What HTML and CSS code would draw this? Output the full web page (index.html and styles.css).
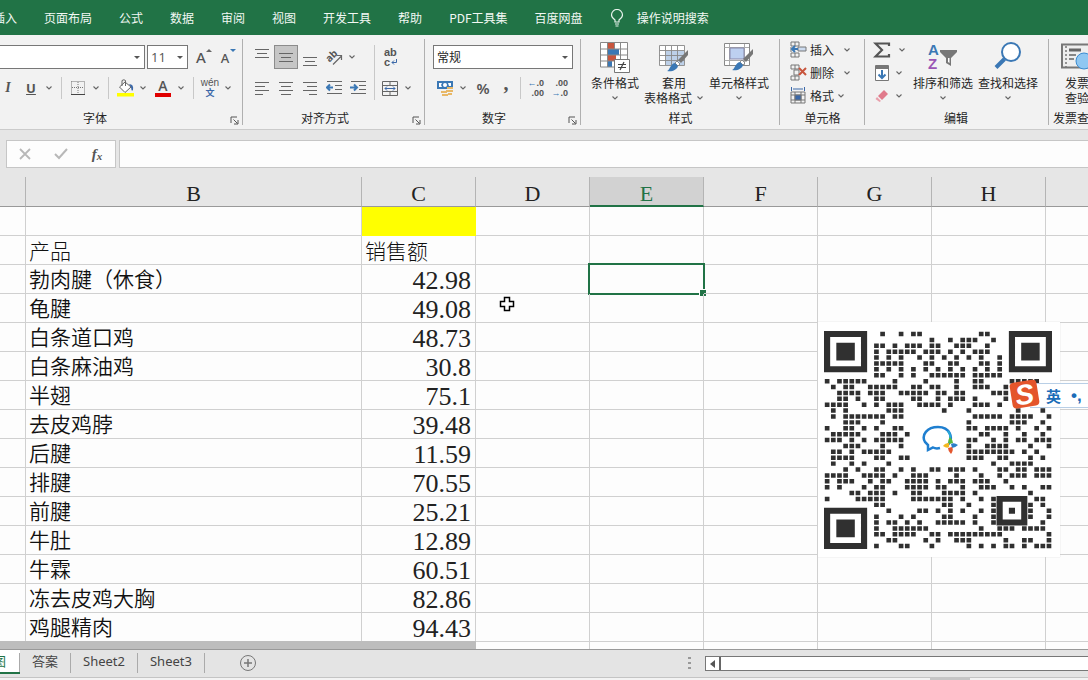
FILE: index.html
```html
<!DOCTYPE html>
<html lang="zh-CN">
<head>
<meta charset="utf-8">
<title>销售额</title>
<link rel="stylesheet" href="styles.css">
</head>
<body>
<svg class="defs" aria-hidden="true">
  <symbol id="chev" viewBox="0 0 8 6"><path d="M1.500 1.500 4 4 6.500 1.500" fill="none" stroke="#666" stroke-width="1.100"/></symbol>
  <symbol id="launch" viewBox="0 0 9 9"><path d="M1 7V1H7M3.500 3.500 7.500 7.500M8 4V8H4" fill="none" stroke="#555"/></symbol>
  <symbol id="brush" viewBox="0 0 22 22"><path d="M21 0V5L14 13 11 10Z" fill="#777"/><path d="M10 11 13 14 11 16 8 13Z" fill="#fff" stroke="#777" stroke-width=".8"/><path d="M8 13 11 16C10 20 5 22 0 21 3 20 3 14 8 13Z" fill="#3b78b5"/></symbol>
</svg>

<nav class="menu" aria-label="功能区">
  <a href="#">插入</a><a href="#">页面布局</a><a href="#">公式</a><a href="#">数据</a><a href="#">审阅</a><a href="#">视图</a><a href="#">开发工具</a><a href="#">帮助</a><a href="#">PDF工具集</a><a href="#">百度网盘</a>
  <a href="#" class="tell"><svg width="14" height="18" viewBox="0 0 14 18"><path d="M5 13V11C3 9.500 1.500 8 1.500 6A5.500 5.500 0 0 1 12.500 6C12.500 8 11 9.500 9 11V13ZM5 15H9M5.500 17H8.500" fill="none" stroke="#e9f3ed" stroke-width="1.200"/></svg>操作说明搜索</a>
</nav>

<div class="ribbon">
  <section class="group g-font">
    <div class="body">
      <div class="row">
        <button class="combo c-name" aria-label="字体名称"><span></span><i class="tri"></i></button>
        <button class="combo c-size" aria-label="字号"><span>11</span><i class="tri"></i></button>
        <button class="tool grow" aria-label="增大字号"><b class="la">A</b><i class="up"></i></button>
        <button class="tool shrink" aria-label="减小字号"><b class="sa">A</b><i class="down"></i></button>
      </div>
      <div class="row">
        <button class="tool half" aria-label="倾斜"><em class="ital">I</em></button>
        <button class="tool u-btn" aria-label="下划线"><b class="under">U</b></button><button class="ch" aria-label="下划线选项"><svg><use href="#chev"/></svg></button>
        <span class="sep"></span>
        <button class="tool" aria-label="边框"><svg width="14" height="14" viewBox="0 0 14 14"><path d="M.5 .5H13.500V13M.5 .5V13M7 1V13M1 6.500H13" fill="none" stroke="#777" stroke-dasharray="1 1"/><path d="M0 13.500H14" stroke="#444"/></svg></button><button class="ch" aria-label="边框选项"><svg><use href="#chev"/></svg></button>
        <span class="sep"></span>
        <button class="tool" aria-label="填充颜色"><svg width="17" height="18" viewBox="0 0 17 18"><path d="M8 3 14 8 8 13.500 2.500 8Z" fill="#fff" stroke="#666"/><path d="M5 7V1.500Q7 0 8.500 1.500V7" fill="none" stroke="#666"/><path d="M12 5Q17 5 16 11 15 12 14.500 11 14 7 12 5Z" fill="#3b68a8"/><path d="M0 14H17V17.500H0Z" fill="#ff0"/></svg></button><button class="ch" aria-label="填充颜色选项"><svg><use href="#chev"/></svg></button>
        <button class="tool fcol" aria-label="字体颜色"><b>A</b></button><button class="ch" aria-label="字体颜色选项"><svg><use href="#chev"/></svg></button>
        <span class="sep"></span>
        <button class="tool wen" aria-label="拼音"><span>wén</span><b>文</b></button><button class="ch" aria-label="拼音选项"><svg><use href="#chev"/></svg></button>
      </div>
    </div>
    <h2>字体</h2><button class="launch" aria-label="字体设置"><svg><use href="#launch"/></svg></button>
  </section>

  <section class="group g-align">
    <div class="split">
      <div class="body left">
        <div class="row">
          <button class="tool" aria-label="顶端对齐"><svg class="ic"><path d="M1 .5H15M3 4.500H13M1 8.500H15"/></svg></button>
          <button class="tool on" aria-label="垂直居中"><svg class="ic"><path d="M1 4.500H15M3 8.500H13M1 12.500H15"/></svg></button>
          <button class="tool" aria-label="底端对齐"><svg class="ic"><path d="M1 8.500H15M3 12.500H13M1 16.500H15"/></svg></button>
          <button class="tool" aria-label="方向"><svg class="rot" width="18" height="18" viewBox="0 0 18 18"><text x="1" y="12" transform="rotate(-45 6 9)" class="abt">ab</text><path d="M8 16.500 16 8.500M12 7.500H16.500V12" fill="none" stroke="#666" stroke-width="1.200"/></svg></button><button class="ch" aria-label="方向选项"><svg><use href="#chev"/></svg></button>
        </div>
        <div class="row">
          <button class="tool" aria-label="左对齐"><svg class="ic"><path d="M1 2.500H15M1 6.500H11M1 10.500H15M1 14.500H9"/></svg></button>
          <button class="tool" aria-label="居中"><svg class="ic"><path d="M1 2.500H15M3 6.500H13M1 10.500H15M3 14.500H13"/></svg></button>
          <button class="tool" aria-label="右对齐"><svg class="ic"><path d="M1 2.500H15M5 6.500H15M1 10.500H15M7 14.500H15"/></svg></button>
          <button class="tool" aria-label="减少缩进"><svg class="ic"><path d="M1 1.500H16M9 5.500H16M9 9.500H16M1 13.500H16"/><path class="blue" d="M7 7.500H1M4 4.500 1 7.500 4 10.500"/></svg></button>
          <button class="tool" aria-label="增加缩进"><svg class="ic"><path d="M1 1.500H16M9 5.500H16M9 9.500H16M1 13.500H16"/><path class="blue" d="M0 7.500H6M4 4.500 7 7.500 4 10.500"/></svg></button>
        </div>
      </div>
      <span class="vsep"></span>
      <div class="body">
        <div class="row"><button class="tool wrap" aria-label="自动换行"><span>ab</span><span>c<svg width="6" height="6" viewBox="0 0 6 6"><path d="M5.500 0V3.500H1M3 1.500 1 3.500 3 5.500" fill="none" stroke="#3b68a8"/></svg></span></button></div>
        <div class="row"><button class="tool" aria-label="合并后居中"><svg class="ic"><path d="M.5 1.500H15.500V15.500H.5ZM.5 5.500H15.500M.5 11.500H15.500M8 1.500V5M8 12V15"/><path class="thin" d="M3 8.500H13M5 6.500 3 8.500 5 10.500M11 6.500 13 8.500 11 10.500"/></svg></button><button class="ch" aria-label="合并选项"><svg><use href="#chev"/></svg></button></div>
      </div>
    </div>
    <h2>对齐方式</h2><button class="launch" aria-label="对齐设置"><svg><use href="#launch"/></svg></button>
  </section>

  <section class="group g-num">
    <div class="body">
      <div class="row"><button class="combo c-fmt" aria-label="数字格式"><span>常规</span><i class="tri"></i></button></div>
      <div class="row">
        <button class="tool" aria-label="会计格式"><svg width="17" height="17" viewBox="0 0 17 17"><path d="M0 1H16V9H0Z" fill="#3b78b5"/><path d="M2 3H5L4 5 5 7H2ZM11 3H14V6H12Z" fill="#fff"/><circle cx="8" cy="5" r="2" fill="#fff"/><path d="M10 8H16M9 11H16M4 12H10M5 15H11M11 14H15" stroke="#e8b868" stroke-width="2"/></svg></button><button class="ch" aria-label="会计格式选项"><svg><use href="#chev"/></svg></button>
        <button class="tool pct" aria-label="百分比">%</button>
        <button class="tool comma" aria-label="千位分隔">,</button>
        <span class="sep tight"></span>
        <button class="tool dec" aria-label="增加小数位"><span><i>←</i>.0</span><span>.00</span></button>
        <button class="tool dec" aria-label="减少小数位"><span>.00</span><span><i>→</i>.0</span></button>
      </div>
    </div>
    <h2>数字</h2><button class="launch" aria-label="数字设置"><svg><use href="#launch"/></svg></button>
  </section>

  <section class="group g-style">
    <div class="bigs">
      <button class="big"><svg width="30" height="31" viewBox="0 0 30 31"><path d="M1 1H28V25H1Z" fill="#fff"/><path d="M8 1H14V7H8ZM8 13H16V19H8Z" fill="#c8553d"/><path d="M8 7H19V13H8ZM8 19H12V25H8Z" fill="#3b78b5"/><path d="M.5 .5H27.500V25H.5ZM.5 7H28M.5 13H28M.5 19H28M7.500 1V25M14.500 1V7M20.500 1V25" fill="none" stroke="#888"/><path d="M14.500 17.500H29.500V30.500H14.500Z" fill="#fff" stroke="#777"/><path d="M18 22.500H26M18 25.500H26M24 20 20 28" stroke="#444" stroke-width="1.200"/></svg><span>条件格式</span><svg class="dn"><use href="#chev"/></svg></button>
      <button class="big"><svg width="30" height="31" viewBox="0 0 30 31"><path d="M.5 3.500H25.500V23.500H.5Z" fill="#fff"/><path d="M7 9H25V23H7Z" fill="#bdd0e8"/><path d="M.5 3.500H25.500V23.500H.5ZM.5 8.500H25M.5 13.500H25M.5 18.500H25M6.500 4V23M12.500 4V23M18.500 4V23" fill="none" stroke="#888" stroke-width=".9"/><use href="#brush" x="8" y="8" width="22" height="22"/></svg><span>套用</span><span class="two">表格格式<svg><use href="#chev"/></svg></span></button>
      <button class="big"><svg width="30" height="31" viewBox="0 0 30 31"><path d="M.5 1.500H25.500V23.500H.5Z" fill="#fff" stroke="#888"/><path d="M.5 5.500H25M.5 18.500H25M5.500 2V23M20.500 2V23" stroke="#aaa"/><path d="M6 6H20V17H6Z" fill="#bdd0f0" stroke="#88a"/><use href="#brush" x="8" y="7" width="22" height="22"/></svg><span>单元格样式</span><svg class="dn"><use href="#chev"/></svg></button>
    </div>
    <h2>样式</h2>
  </section>

  <section class="group g-cells">
    <div class="stack">
      <button class="line"><svg class="ci"><path d="M1 1H9V5H1ZM5 1V5M1 12H9V16H1ZM5 12V16M1 6V11"/><path d="M8 6H16V10H8Z" fill="#cddcf0"/><path class="blue" d="M8 8H2M5 5 2 8 5 11"/></svg><span>插入</span><svg class="sp"><use href="#chev"/></svg></button>
      <button class="line"><svg class="ci"><path d="M1 1H9V5H1ZM5 1V5M1 12H9V16H1ZM5 12V16M4 6H9V11H4Z"/><path d="M9 4 16 11M16 4 9 11" class="red"/></svg><span>删除</span><svg class="sp"><use href="#chev"/></svg></button>
      <button class="line"><svg class="ci"><path d="M1 5H15V16H1ZM1 8H15M1 13H15M5 5V16M11 5V16"/><path d="M5 8H11V13H5Z" fill="#3b68a8"/><path class="bl" d="M1.500 0V4M14.500 0V4M3 2H13"/></svg><span>格式</span><svg><use href="#chev"/></svg></button>
    </div>
    <h2>单元格</h2>
  </section>

  <section class="group g-edit">
    <div class="bigs">
      <div class="stack mini">
        <button class="line" aria-label="自动求和"><svg width="18" height="16" viewBox="0 0 18 16"><path d="M16 4V1.500H2.500L9 8 2.500 14.500H16V12" fill="none" stroke="#555" stroke-width="2.200"/></svg><svg class="sp"><use href="#chev"/></svg></button>
        <button class="line" aria-label="填充"><svg width="18" height="16" viewBox="0 0 18 16"><path d="M2.500 .5H15.500V15.500H2.500Z" fill="#fff" stroke="#777"/><path d="M2 1H16V4H2Z" fill="#777"/><path d="M9 5V13M5.500 9.500 9 13 12.500 9.500" fill="none" stroke="#3b78b5" stroke-width="2"/></svg><svg><use href="#chev"/></svg></button>
        <button class="line" aria-label="清除"><svg width="18" height="16" viewBox="0 0 18 16"><path d="M11 2 15 6 9 12 5 8Z" fill="#e07a8b"/><path d="M4 9 8 13 6.500 14 2.500 11Z" fill="#e9a0ac"/></svg><svg><use href="#chev"/></svg></button>
      </div>
      <button class="big"><svg width="30" height="31" viewBox="0 0 30 31"><text x="0" y="13" class="sa-a">A</text><text x="0" y="27" class="sa-z">Z</text><path d="M12 8H29V10L23 16V24L18 21V16L12 10Z" fill="#777"/><path d="M20 16H21.500V21L20 20Z" fill="#fff"/></svg><span>排序和筛选</span><svg class="dn"><use href="#chev"/></svg></button>
      <button class="big"><svg width="30" height="31" viewBox="0 0 30 31"><circle cx="18" cy="10" r="9" fill="#fff" stroke="#3b78b5" stroke-width="2"/><path d="M11.500 17 3 25.500" stroke="#3b78b5" stroke-width="4"/></svg><span>查找和选择</span><svg class="dn"><use href="#chev"/></svg></button>
    </div>
    <h2>编辑</h2>
  </section>

  <section class="group g-inv">
    <div class="bigs">
      <button class="big"><svg width="32" height="31" viewBox="0 0 32 31"><path d="M1 2.500H31V25.500H1Z" fill="#eee" stroke="#777" stroke-width="2"/><path d="M5 4V25" stroke="#777" stroke-width="1.500" stroke-dasharray="2 2"/><path d="M8 8H20" stroke="#666" stroke-width="3"/><path d="M8 13H15M8 17H13" stroke="#666" stroke-width="1.500"/><circle cx="23" cy="19" r="8" fill="#8fc7f2" stroke="#3b8bd0"/></svg><span>发票</span><span>查验</span></button>
    </div>
    <h2>发票查验</h2>
  </section>
</div>

<div class="fbar">
  <div class="fbtns">
    <button aria-label="取消"><svg width="12" height="12" viewBox="0 0 12 12"><path d="M1 1 11 11M11 1 1 11" stroke="#b8b8b8" stroke-width="1.800"/></svg></button>
    <button aria-label="输入"><svg width="14" height="12" viewBox="0 0 14 12"><path d="M1 6 5 10 13 1" fill="none" stroke="#b8b8b8" stroke-width="2"/></svg></button>
    <button aria-label="插入函数" class="fx"><i>f</i><small>x</small></button>
  </div>
  <input type="text" aria-label="编辑栏">
</div>

<main class="sheet">
  <table>
    <colgroup><col class="ca"><col class="cb"><col class="cn"><col class="cn"><col class="cn"><col class="cn"><col class="cn"><col class="cn"><col></colgroup>
    <thead><tr><th></th><th>B</th><th>C</th><th>D</th><th class="cur">E</th><th>F</th><th>G</th><th>H</th><th></th></tr></thead>
    <tbody>
      <tr><td></td><td></td><td class="hl"></td><td></td><td></td><td></td><td></td><td></td><td></td></tr>
      <tr class="song"><td></td><td>产品</td><td>销售额</td><td></td><td></td><td></td><td></td><td></td><td></td></tr>
      <tr><td></td><td>勃肉腱（休食）</td><td class="n">42.98</td><td></td><td class="active"><span class="box"></span></td><td></td><td></td><td></td><td></td></tr>
      <tr><td></td><td>龟腱</td><td class="n">49.08</td><td></td><td></td><td></td><td></td><td></td><td></td></tr>
      <tr><td></td><td>白条道口鸡</td><td class="n">48.73</td><td></td><td></td><td></td><td></td><td></td><td></td></tr>
      <tr><td></td><td>白条麻油鸡</td><td class="n">30.8</td><td></td><td></td><td></td><td></td><td></td><td></td></tr>
      <tr><td></td><td>半翅</td><td class="n">75.1</td><td></td><td></td><td></td><td></td><td></td><td></td></tr>
      <tr><td></td><td>去皮鸡脖</td><td class="n">39.48</td><td></td><td></td><td></td><td></td><td></td><td></td></tr>
      <tr><td></td><td>后腱</td><td class="n">11.59</td><td></td><td></td><td></td><td></td><td></td><td></td></tr>
      <tr><td></td><td>排腱</td><td class="n">70.55</td><td></td><td></td><td></td><td></td><td></td><td></td></tr>
      <tr><td></td><td>前腱</td><td class="n">25.21</td><td></td><td></td><td></td><td></td><td></td><td></td></tr>
      <tr><td></td><td>牛肚</td><td class="n">12.89</td><td></td><td></td><td></td><td></td><td></td><td></td></tr>
      <tr><td></td><td>牛霖</td><td class="n">60.51</td><td></td><td></td><td></td><td></td><td></td><td></td></tr>
      <tr><td></td><td>冻去皮鸡大胸</td><td class="n">82.86</td><td></td><td></td><td></td><td></td><td></td><td></td></tr>
      <tr><td></td><td>鸡腿精肉</td><td class="n">94.43</td><td></td><td></td><td></td><td></td><td></td><td></td></tr>
      <tr><td></td><td></td><td></td><td></td><td></td><td></td><td></td><td></td><td></td></tr>
    </tbody>
  </table>
  <span class="strip"></span>
  <svg class="cursor" viewBox="0 0 16 16"><path d="M5.500 1.500H10.500V5.500H14.500V10.500H10.500V14.500H5.500V10.500H1.500V5.500H5.500Z" fill="#fff" stroke="#000" stroke-width="1.500"/></svg>
  <div class="qr">
    <svg id="code" viewBox="0 0 37 37" preserveAspectRatio="none"></svg>
    <svg class="logo" viewBox="0 0 38 32"><path d="M27 22C33 15 29 4 17 4 6 4 0 12 4 19L7 22V27L12 24.500Q15 26 19 25" fill="none" stroke="#1f7fd0" stroke-width="2.500"/><path d="M27 8Q30 12 29 16" fill="none" stroke="#28a8d8" stroke-width="2"/><path d="M29 14Q32 17 32 20L28 21Q26 18 29 14Z" fill="#58b93c"/><path d="M37 22Q34 25 31 25L30 21Q33 19 37 22Z" fill="#2b7fc8"/><path d="M30 31Q27 28 27 25L31 24Q33 27 30 31Z" fill="#e4572e"/><path d="M22 23Q24 20 28 20L28 24Q26 26 22 23Z" fill="#f3b820"/></svg>
  </div>
  <div class="ime"><svg width="34" height="32" viewBox="0 0 34 32"><g transform="rotate(-9 17 16)"><rect x="3" y="3" width="27" height="26" rx="4" fill="#e4552b"/><text x="7" y="26" class="slogo">S</text></g></svg><b>英</b><b class="dots">•,</b></div>
</main>

<footer class="tabs">
  <a href="#" class="tab sel"><span>图</span></a><a href="#" class="tab">答案</a><a href="#" class="tab">Sheet2</a><a href="#" class="tab">Sheet3</a>
  <button class="add" aria-label="新工作表"><svg width="18" height="18" viewBox="0 0 18 18"><path d="M9 5V13M5 9H13" stroke="#777" stroke-width="1.500"/><circle cx="9" cy="9" r="7.500" fill="none" stroke="#777"/></svg></button>
  <span class="grip"></span>
  <div class="scroll"><button aria-label="向左滚动"><i></i></button></div>
</footer>
<div class="status"><span></span></div>
<script src="qr.js"></script>
</body>
</html>
```

FILE: styles.css
```css
* { box-sizing: border-box; }
body { margin: 0; height: 100vh; display: flex; flex-direction: column; overflow: hidden; background: #e6e6e6; color: #262626; font: 12px/16px "Noto Sans CJK SC", sans-serif; }
button { margin: 0; padding: 0; border: 0; background: none; color: inherit; font: inherit; }
svg { display: block; flex: none; }
.defs { position: absolute; width: 0; height: 0; }

.menu { flex: none; height: 35px; display: flex; align-items: center; gap: 27px; margin-left: -7px; background: #217346; white-space: nowrap; overflow: hidden; }
.menu a { color: #f2f8f4; text-decoration: none; }
.menu .tell { display: flex; align-items: center; gap: 13px; }

.ribbon { flex: none; height: 95px; display: flex; overflow: hidden; background: #f2f2f2; border-bottom: 1px solid #cbcbcb; }
.group { position: relative; flex: none; display: flex; flex-direction: column; justify-content: space-between; padding: 10px 0 3px; }
.group::after { content: ""; position: absolute; right: 0; top: 4px; bottom: 4px; width: 1px; background: #b0b0b0; }
.group h2 { margin: 0; font-size: 12px; font-weight: 400; text-align: center; line-height: 16px; }
.g-font { width: 243px; }
.g-font h2 { padding-right: 53px; }
.g-align { width: 182px; padding-left: 7px; }
.g-align h2 { padding-right: 25px; }
.g-num { width: 156px; padding-left: 8px; }
.g-num h2 { padding-right: 26px; }
.g-style { width: 199px; padding: 7px 0 3px 10px; }
.g-style h2 { padding-right: 10px; }
.g-cells { width: 85px; padding: 3px 0 3px 10px; }
.g-cells h2 { padding-right: 10px; }
.g-edit { width: 184px; padding: 3px 0 3px 8px; }
.g-edit h2 { padding-right: 10px; }
.g-inv { width: 60px; padding: 7px 4px 3px 0; }
.g-inv .bigs { justify-content: center; }
.g-inv h2 { white-space: nowrap; }
.launch { position: absolute; right: 4px; bottom: 4px; }
.launch svg { width: 9px; height: 9px; }

.body { display: flex; flex-direction: column; gap: 7px; }
.row { display: flex; align-items: center; height: 24px; }
.split { display: flex; }
.left { width: 120px; }
.vsep { width: 1px; margin: 0 3px 0 4px; background: #c8c8c8; }
.sep { width: 1px; height: 22px; margin: 0 4px 0 6px; background: #c8c8c8; }
.sep.tight { margin: 0 3px; }
.tool { width: 24px; height: 24px; flex: none; display: flex; align-items: center; justify-content: center; color: #555; }
.tool.half { width: 16px; }
.tool.u-btn { margin-left: 3px; }
.tool.on { background: #c6c6c6; border: 1px solid #8c8c8c; }
.ch { width: 12px; height: 24px; display: flex; align-items: center; justify-content: center; }
.ch svg, .line .sp, .line svg:last-child, .dn, .two svg { width: 8px; height: 6px; }
.ic { width: 16px; height: 17px; fill: none; stroke: #666; }
.ic .blue, .ci .blue { stroke: #3b78b5; stroke-width: 2; fill: none; }
.ic .thin, .ci .bl { stroke: #3b68a8; }
.combo { height: 24px; display: flex; align-items: center; justify-content: space-between; padding: 0 4px 0 3px; background: #fff; border: 1px solid #777; }
.c-name { width: 145px; border-left: 0; }
.c-size { width: 41px; margin-left: 2px; font-family: "Open Sans", sans-serif; font-size: 13px; color: #555; }
.c-fmt { width: 140px; }
.tri { border: 3px solid transparent; border-top-color: #555; border-bottom: 0; }
.grow, .shrink { position: relative; font-family: "Noto Sans", sans-serif; }
.grow { margin-left: 1px; }
.la { font-size: 15px; font-weight: 500; }
.sa { font-size: 13px; font-weight: 500; padding-top: 2px; }
.up, .down { position: absolute; right: 1px; top: 4px; border: 3px solid transparent; }
.up { border-bottom-color: #666; border-top: 0; }
.down { border-top-color: #3b78b5; border-bottom: 0; }
.ital { font: italic bold 14px "Liberation Serif", serif; }
.under { font: bold 13px "Open Sans", sans-serif; text-decoration: underline; }
.fcol { margin-left: 2px; }
.fcol b { width: 16px; border-bottom: 4px solid #e00000; font: 600 14px/14px "Open Sans", sans-serif; text-align: center; }
.wen { flex-direction: column; line-height: 10px; font-size: 10px; }
.wen span { font-family: "Liberation Sans", sans-serif; }
.wen b { color: #3b68a8; font-size: 9px; }
.rot { overflow: visible; }
.abt { font: bold 10px "Noto Sans", sans-serif; fill: #555; }
.wrap { flex-direction: column; align-items: flex-start; padding-left: 6px; font: 600 11px/10px "Liberation Sans", sans-serif; }
.wrap span { display: flex; align-items: center; gap: 1px; }
.pct { margin-left: 2px; font: 600 15px "Noto Sans", sans-serif; }
.comma { width: 22px; font: bold 20px/10px "Liberation Serif", serif; padding-bottom: 10px; }
.dec { flex-direction: column; align-items: flex-end; padding-right: 4px; font: 600 9px/10px "Liberation Sans", sans-serif; }
.dec span { display: flex; }
.dec i { color: #3b78b5; font-style: normal; }

.bigs { display: flex; gap: 5px; }
.big { display: flex; flex-direction: column; align-items: center; line-height: 15px; white-space: nowrap; }
.big > svg:first-child { margin-bottom: 2px; overflow: visible; }
.g-edit .big { padding-top: 4px; }
.dn { margin-top: 5px; }
.two { display: flex; align-items: center; gap: 4px; }
.stack { display: flex; flex-direction: column; }
.line { display: flex; align-items: center; gap: 3px; height: 23px; }
.ci { width: 17px; height: 17px; fill: none; stroke: #777; }
.ci .red { stroke: #c8553d; stroke-width: 2; }
.line .sp { margin-left: 6px; }
.mini { width: 35px; }
.mini .line { gap: 4px; }
.mini .line .sp { margin-left: 3px; }
.sa-a { font: bold 15px "Liberation Sans", sans-serif; fill: #3b78b5; }
.sa-z { font: bold 15px "Liberation Sans", sans-serif; fill: #9a55b5; }

.fbar { flex: none; height: 47px; display: flex; align-items: flex-start; gap: 3px; padding: 10px 0 0 6px; }
.fbtns { width: 110px; height: 28px; display: flex; background: #fdfdfd; border: 1px solid #c6c6c6; }
.fbtns button { flex: 1; display: flex; align-items: center; justify-content: center; }
.fbtns .fx { font: bold 15px "Liberation Serif", serif; color: #555; }
.fx small { font: italic bold 11px "Liberation Serif", serif; padding-top: 4px; }
.fbar input { flex: 1; min-width: 0; height: 28px; border: 1px solid #c6c6c6; border-right: 0; background: #fdfdfd; }

.sheet { position: relative; flex: 1; min-height: 0; overflow: hidden; background: #fdfdfd; }
table { width: 100%; table-layout: fixed; border-collapse: separate; border-spacing: 0; }
.ca { width: 26px; }
.cb { width: 336px; }
.cn { width: 114px; }
th { height: 30px; padding: 5px 0 0; vertical-align: top; background: #e6e6e6; border-right: 1px solid #b4b4b4; border-bottom: 1px solid #999; font: 22px/23px "Liberation Serif", serif; color: #222; }
th.cur { background: #d2d2d2; color: #217346; border-bottom: 2px solid #217346; }
td { position: relative; height: 29px; padding: 0 3px 2px; border-right: 1px solid #d0d0d0; border-bottom: 1px solid #d0d0d0; font-size: 21px; font-weight: 350; line-height: 26px; color: #111; white-space: nowrap; }
td:last-child, th:last-child { border-right: 0; }
.song td { padding-bottom: 0; line-height: 28px; font-weight: 300; }
td.hl { background: #ff0; border-color: #ff0; }
td.n { padding: 4px 4px 0; text-align: right; font: 26px/24px "Liberation Serif", serif; color: #222; }
.box { position: absolute; inset: -2px; border: 2px solid #217346; }
.box::after { content: ""; position: absolute; right: -3px; bottom: -3px; width: 6px; height: 6px; background: #217346; border: solid #fdfdfd; border-width: 1px 0 0 1px; }
.strip { position: absolute; left: 0; bottom: 0; width: 476px; height: 8px; background: #bdbdbd; }
.cursor { position: absolute; left: 499px; top: 119px; width: 16px; height: 16px; }
.qr { position: absolute; left: 818px; top: 145px; width: 242px; height: 235px; padding: 9px 8px 8px 6px; background: #fff; box-shadow: 0 0 1px #ccc; }
#code { width: 228px; height: 218px; fill: #303030; }
.logo { position: absolute; left: 103px; top: 101px; width: 38px; height: 32px; }
.ime { position: absolute; left: 1030px; right: 0; top: 206px; height: 25px; display: flex; align-items: center; padding-left: 16px; background: #fff; border: solid #b9cfe6; border-width: 1px 0; color: #1b6cb8; font-size: 15px; white-space: nowrap; }
.ime svg { position: absolute; left: -22px; top: -6px; }
.ime .dots { padding-left: 10px; font: bold 17px "Liberation Sans", sans-serif; }
.slogo { font: bold italic 28px "Liberation Sans", sans-serif; fill: #fff; }

.tabs { flex: none; height: 28px; display: flex; align-items: flex-start; border-top: 1px solid #999; background: #e4e4e4; font: 13px/23px "Noto Sans", "Noto Sans CJK SC", sans-serif; }
.tab { position: relative; padding: 0 13px 0 12px; color: #444; text-decoration: none; }
.tab::after { content: ""; position: absolute; right: 0; top: 3px; height: 20px; width: 1px; background: #aaa; }
.tab.sel { width: 20px; height: 24px; padding: 0; background: #fff; border-bottom: 2px solid #217346; color: #217346; display: flex; justify-content: flex-end; overflow: hidden; }
.tab.sel span { padding-right: 14px; }
.add { margin: 4px 0 0 34px; }
.grip { width: 3px; height: 12px; margin: 7px 14px 0 auto; background: repeating-linear-gradient(#999 0 2px, transparent 2px 5px); }
.scroll { flex: 0 0 383px; height: 15px; margin-top: 6px; background: #fff; border: 1px solid #777; border-right: 0; }
.scroll button { width: 15px; height: 13px; display: flex; align-items: center; justify-content: center; border-right: 2px solid #666; }
.scroll i { border: 4px solid transparent; border-right: 5px solid #555; border-left: 0; }
.status { flex: none; height: 3px; background: #f3f3f3; border-top: 1px solid #c4c4c4; }
.status span { display: block; width: 40px; height: 2px; margin-left: 930px; background: #c4c4c4; }
```

FILE: qr.js
```js
// Dark modules of the code, one list of columns for each row.
const rows = [
  [9,12,14,15,25,26],
  [17,20,22,23,24,27],
  [8,9,11,13,14,15,17,18,21,22,23,26],
  [8,10,11,12,13,14,16,17,18,20,22,24,25,26],
  [8,10,12,15,17,19,21,23,25,28],
  [8,9,10,11,12,16,17,20,21,25,26,28],
  [8,10,12,14,16,18,20,22,24,26,28],
  [8,9,12,14,17,18,19,20,21,22,24,25,26,27,28],
  [0,2,3,4,5,6,11,16,21,24,25,30,31,32,33,34],
  [1,3,4,7,8,9,10,11,14,15,17,18,21,24,25,26,29],
  [2,3,4,5,7,8,9,12,13,14,15,16,18,19,21,22,27,28,29],
  [2,3,5,8,9,14,15,18,20,21,22,24,29],
  [0,1,2,3,6,8,10,11,12,15,16,17,18,20,24,25,26,28],
  [1,3,10,11,12,19,23,31,35],
  [1,3,4,5,6,7,8,9,11,12,24,25,26,27,28,30,31,32,33,36],
  [3,4,5,9,23,30,31,32,35],
  [0,3,4,6,8,11,12,23,24,26,27,28,29,31,34,36],
  [1,2,3,4,5,9,10,11,13,25,26,29,32,35],
  [0,1,2,4,6,8,9,10,11,12,23,24,27,29,31,32,34,35,36],
  [3,4,5,9,12,23,26,27,28,29,33,36],
  [1,2,4,6,7,8,9,10,23,24,25,26,27,28,29,30,32,34],
  [1,2,3,4,8,9,12,13,23,24,25,28,29,33,35],
  [1,4,6,10,27,30,31,32,33],
  [3,5,8,9,12,14,17,18,20,21,22,24,28,29,31,32,34,35,36],
  [0,1,2,3,6,7,8,9,11,14,15,16,21,25,28,30,31,32,34,35,36],
  [0,2,3,4,7,9,10,13,14,15,16,18,20,21,22,24,25,26,29],
  [0,2,6,8,9,13,14,15,16,18,19,22,25,26,27,30,32,35,36],
  [4,5,7,8,9,11,14,15,19,20,21,22,24,33],
  [0,5,6,7,8,9,14,15,16,17,18,19,20,22,25,27,34,35],
  [8,9,19,20,23,27,33,35],
  [10,15,16,18,20,22,25,27,33,36],
  [8,12,14,19,20,24,27,33,36],
  [8,10,11,13,15,18,19,20,21,22,24,27,35],
  [8,11,12,13,14,15,16,25,28,29,30,32,33,34,35],
  [8,9,11,12,13,14,17,18,20,21,22,23,24,25,26,27,28,36],
  [10,11,16,18,21,22,23,29,32,33,36],
  [8,12,13,17,23,25,27,29,30,32,34,35,36]
];
let d = "";
rows.forEach((cols, y) => cols.forEach(x => { d += `M${x + 0.13} ${y + 0.13}h.76v.76h-.76z`; }));
const ring = (x, y, size, inner) => {
  const gap = (size - inner) / 2;
  return `M${x} ${y}h${size}v${size}h-${size}zM${x + 1} ${y + 1}v${size - 2}h${size - 2}v-${size - 2}zM${x + gap} ${y + gap}h${inner}v${inner}h-${inner}z`;
};
d += ring(0, 0, 7, 3) + ring(30, 0, 7, 3) + ring(0, 30, 7, 3) + ring(28, 28, 5, 1);
const path = document.createElementNS("http://www.w3.org/2000/svg", "path");
path.setAttribute("d", d);
document.getElementById("code").append(path);
```
